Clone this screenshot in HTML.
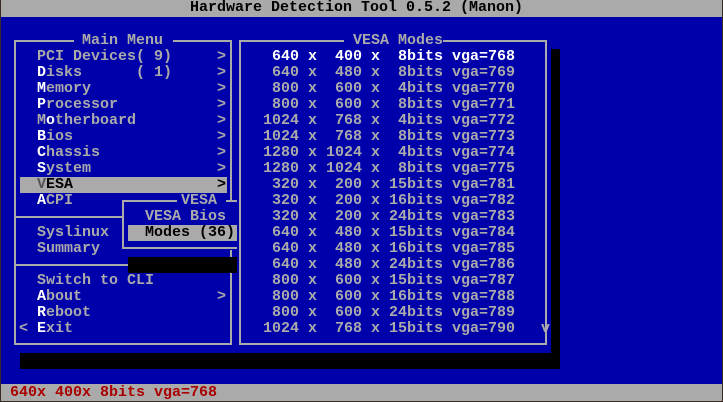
<!DOCTYPE html>
<html><head><meta charset="utf-8"><style>
*{margin:0;padding:0}
html,body{width:723px;height:402px;overflow:hidden;background:#3a2a24}
#s{position:absolute;left:1px;top:0;width:721px;height:401px;background:#0000AA;overflow:hidden}
.t{position:absolute;font-family:"Liberation Mono",monospace;font-size:15px;line-height:16px;height:16px;white-space:pre;color:#AAAAAA;font-weight:bold}
.w{color:#fff}
.k{color:#000}
.d{color:#555}
.b{position:absolute;background:#AAAAAA}
.z{position:absolute;background:#000}
.bl{position:absolute;background:#0000AA}
</style></head><body><div id="s">
<div class="b" style="left:0;top:0;width:721px;height:17px"></div>
<div class="t k" style="left:189px;top:0">Hardware Detection Tool 0.5.2 (Manon)</div>

<!-- main menu box -->
<div class="b" style="left:13px;top:40px;width:2px;height:305px"></div>
<div class="b" style="left:229px;top:40px;width:2px;height:305px"></div>
<div class="b" style="left:13px;top:40px;width:60px;height:2px"></div>
<div class="b" style="left:172px;top:40px;width:59px;height:2px"></div>
<div class="b" style="left:13px;top:343px;width:218px;height:2px"></div>
<div class="b" style="left:13px;top:216px;width:218px;height:2px"></div>
<div class="b" style="left:13px;top:264px;width:218px;height:2px"></div>
<div class="t" style="left:81px;top:33px">Main Menu</div>
<div class="t" style="left:36px;top:49px">PCI Devices( 9)</div>
<div class="t" style="left:36px;top:65px"><span class="w">D</span>isks      ( 1)</div>
<div class="t" style="left:36px;top:81px"><span class="w">M</span>emory</div>
<div class="t" style="left:36px;top:97px"><span class="w">P</span>rocessor</div>
<div class="t" style="left:36px;top:113px">M<span class="w">o</span>therboard</div>
<div class="t" style="left:36px;top:129px"><span class="w">B</span>ios</div>
<div class="t" style="left:36px;top:145px"><span class="w">C</span>hassis</div>
<div class="t" style="left:36px;top:161px"><span class="w">S</span>ystem</div>
<div class="b" style="left:19px;top:177px;width:207px;height:16px"></div>
<div class="t k" style="left:36px;top:177px"><span class="d">V</span>ESA</div>
<div class="t" style="left:36px;top:193px"><span class="w">A</span>CPI</div>
<div class="t" style="left:36px;top:225px">Syslinux</div>
<div class="t" style="left:36px;top:241px">Summary</div>
<div class="t" style="left:36px;top:273px">Switch to CLI</div>
<div class="t" style="left:36px;top:289px"><span class="w">A</span>bout</div>
<div class="t" style="left:36px;top:305px"><span class="w">R</span>eboot</div>
<div class="t" style="left:18px;top:321px">&lt; <span class="w">E</span>xit</div>
<div class="t" style="left:216px;top:49px">&gt;</div>
<div class="t" style="left:216px;top:65px">&gt;</div>
<div class="t" style="left:216px;top:81px">&gt;</div>
<div class="t" style="left:216px;top:97px">&gt;</div>
<div class="t" style="left:216px;top:113px">&gt;</div>
<div class="t" style="left:216px;top:129px">&gt;</div>
<div class="t" style="left:216px;top:145px">&gt;</div>
<div class="t" style="left:216px;top:161px">&gt;</div>
<div class="t k" style="left:216px;top:177px">&gt;</div>
<div class="t" style="left:216px;top:289px">&gt;</div>

<!-- sub box -->
<div class="bl" style="left:121px;top:200px;width:115px;height:50px"></div>
<div class="b" style="left:121px;top:200px;width:2px;height:49px"></div>
<div class="b" style="left:121px;top:200px;width:55px;height:2px"></div>
<div class="b" style="left:225px;top:200px;width:11px;height:2px"></div>
<div class="b" style="left:121px;top:247px;width:115px;height:2px"></div>
<div class="t" style="left:180px;top:193px">VESA</div>
<div class="t" style="left:144px;top:209px">VESA Bios</div>
<div class="b" style="left:127px;top:225px;width:109px;height:16px"></div>
<div class="t k" style="left:144px;top:225px">Modes (36)</div>
<div class="z" style="left:127px;top:257px;width:109px;height:16px"></div>

<!-- modes box -->
<div class="bl" style="left:236px;top:33px;width:314px;height:320px"></div>
<div class="b" style="left:238px;top:40px;width:2px;height:305px"></div>
<div class="b" style="left:544px;top:40px;width:2px;height:305px"></div>
<div class="b" style="left:238px;top:40px;width:105px;height:2px"></div>
<div class="b" style="left:442px;top:40px;width:104px;height:2px"></div>
<div class="b" style="left:238px;top:343px;width:308px;height:2px"></div>
<div class="t" style="left:352px;top:33px">VESA Modes</div>
<div class="t w" style="left:262px;top:49px"> 640 x  400 x  8bits vga=768</div>
<div class="t" style="left:262px;top:65px"> 640 x  480 x  8bits vga=769
 800 x  600 x  4bits vga=770
 800 x  600 x  8bits vga=771
1024 x  768 x  4bits vga=772
1024 x  768 x  8bits vga=773
1280 x 1024 x  4bits vga=774
1280 x 1024 x  8bits vga=775
 320 x  200 x 15bits vga=781
 320 x  200 x 16bits vga=782
 320 x  200 x 24bits vga=783
 640 x  480 x 15bits vga=784
 640 x  480 x 16bits vga=785
 640 x  480 x 24bits vga=786
 800 x  600 x 15bits vga=787
 800 x  600 x 16bits vga=788
 800 x  600 x 24bits vga=789
1024 x  768 x 15bits vga=790</div>
<div class="t" style="left:540px;top:321px">v</div>

<!-- shadows -->
<div class="z" style="left:550px;top:49px;width:9px;height:320px"></div>
<div class="z" style="left:19px;top:353px;width:540px;height:16px"></div>

<!-- status -->
<div class="b" style="left:0;top:384px;width:721px;height:17px"></div>
<div class="t" style="left:9px;top:385px;color:#AA0000">640x 400x 8bits vga=768</div>
</div></body></html>
